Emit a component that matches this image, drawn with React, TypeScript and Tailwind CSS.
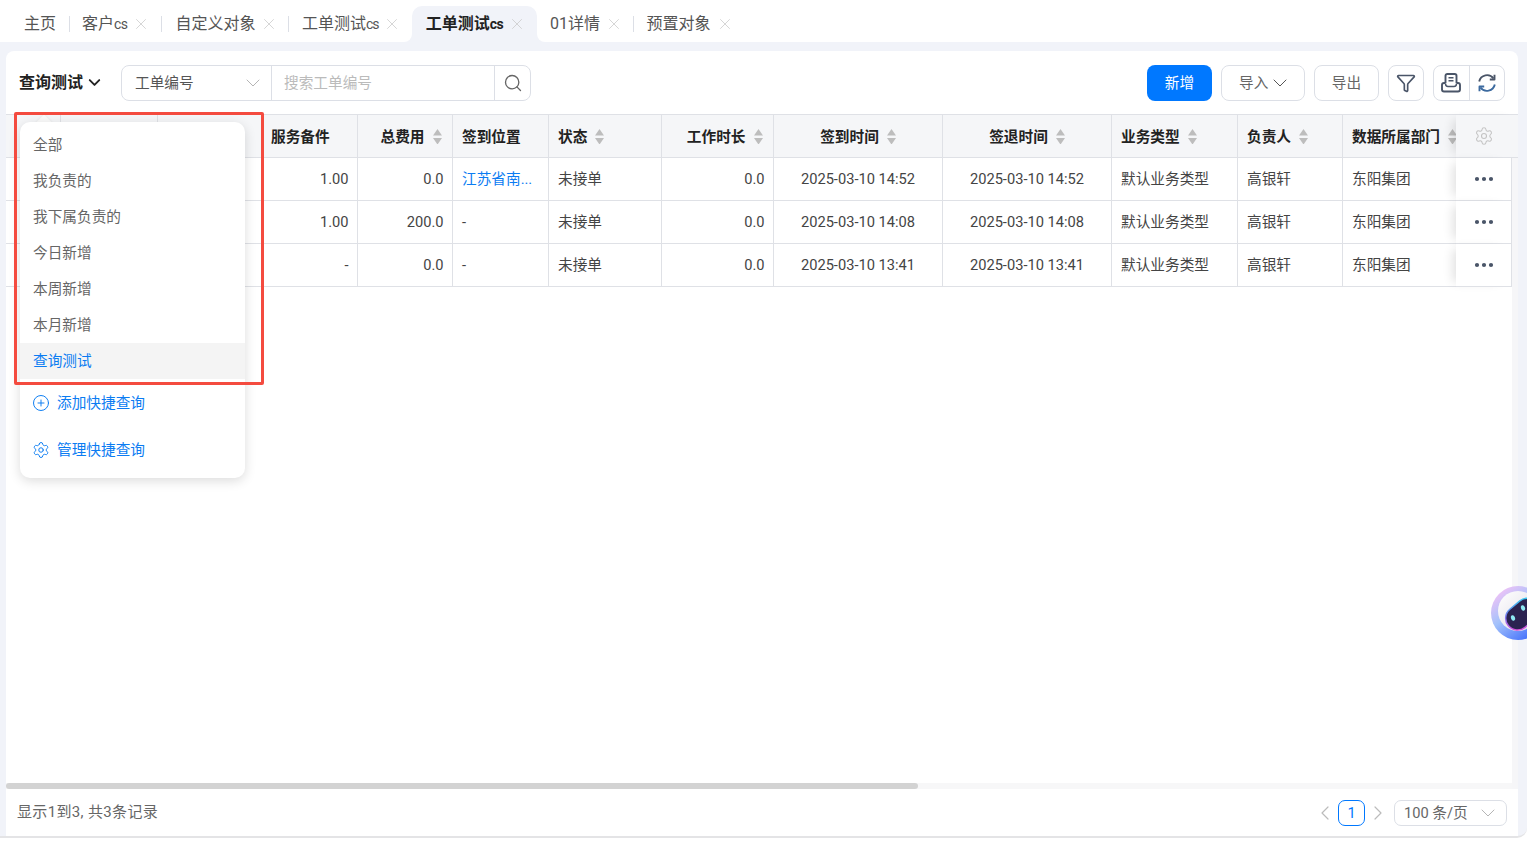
import React from "react";
import { ChevronDown, ChevronLeft, ChevronRight, CirclePlus, Ellipsis, Funnel, Search, Settings, X } from "lucide-react";

const FONT = "font-['Roboto','Noto_Sans_CJK_SC',sans-serif]";
const cols = "grid grid-cols-[55px_97px_104px_96px_95px_96px_113px_112px_169px_169px_126px_105px_113px_1fr]";

function Tab({ label, cs, active, plain, narrow }: { label: string; cs?: boolean; active?: boolean; plain?: boolean; narrow?: boolean }) {
  return (
    <div className={active ? "relative flex h-9 items-center rounded-t-[10px] bg-[#f1f3f9] pl-[14px] pr-[11px] font-bold text-[#222]" : "flex h-9 items-center pl-[13px] text-[#555]"}>
      {active && (
        <>
          <div className="absolute bottom-0 left-[-8px] h-2 w-2 bg-[#f1f3f9]"><div className="h-full w-full rounded-br-[8px] bg-white" /></div>
          <div className="absolute bottom-0 right-[-8px] h-2 w-2 bg-[#f1f3f9]"><div className="h-full w-full rounded-bl-[8px] bg-white" /></div>
        </>
      )}
      <span className="whitespace-nowrap">
        {label}
        {cs && <span className={narrow ? "text-[14px] tracking-[-1.1px]" : "text-[14px] tracking-[-0.6px]"}>cs</span>}
      </span>
      {!plain && <X className="ml-[5px] h-[18px] w-[18px] text-[#c8c8c8]" strokeWidth={1} />}
    </div>
  );
}

function Sep({ wide }: { wide?: boolean }) {
  return <div className={wide ? "flex h-9 w-[12px] items-center justify-end" : "flex h-9 w-[10.5px] items-center justify-end"}><div className="h-4 w-px bg-[#dcdfe6]" /></div>;
}

function Sort() {
  return (
    <span className="ml-2 inline-flex flex-col gap-[2px]">
      <svg width="9" height="6.5" viewBox="0 0 10 6" preserveAspectRatio="none"><path d="M5 0L10 6H0z" fill="#bdbdbd" /></svg>
      <svg width="9" height="6.5" viewBox="0 0 10 6" preserveAspectRatio="none"><path d="M5 6L0 0H10z" fill="#bdbdbd" /></svg>
    </span>
  );
}

function Head({ t, align = "left", sort = true }: { t?: string; align?: "left" | "right" | "center"; sort?: boolean }) {
  const j = align === "left" ? "justify-start pl-[9px]" : align === "right" ? "justify-end pr-[10.5px]" : "justify-center";
  return (
    <div className={"flex h-[43px] items-center overflow-hidden whitespace-nowrap border-r border-b border-[#dfe1e6] pt-[1px] font-bold text-[#222] " + j}>
      {t}
      {t && sort && <Sort />}
    </div>
  );
}

function Cell({ t, align = "left", blue }: { t?: string; align?: "left" | "right" | "center"; blue?: boolean }) {
  const j = align === "left" ? "justify-start pl-[9px]" : align === "right" ? "justify-end pr-[8.5px]" : "justify-center";
  return (
    <div className={"flex h-[43px] items-center overflow-hidden whitespace-nowrap border-r border-b border-[#dfe1e6] " + j + (blue ? " text-[#0b7cf2]" : " text-[#444]")}>
      {t}
    </div>
  );
}

const rows = [
  { parts: "1.00", fee: "0.0", loc: "江苏省南...", blue: true, time: "2025-03-10 14:52" },
  { parts: "1.00", fee: "200.0", loc: "-", blue: false, time: "2025-03-10 14:08" },
  { parts: "-", fee: "0.0", loc: "-", blue: false, time: "2025-03-10 13:41" },
];

function Printer() {
  return (
    <svg width="20" height="20" viewBox="0 0 20 20" fill="none" stroke="#4a5568" strokeWidth="1.9">
      <path d="M4.5 10V2.8C4.5 1.8 5.3 1 6.3 1h7.4c1 0 1.8.8 1.8 1.8V10" />
      <path d="M7.5 4.8h5M7.5 7.8h5" strokeWidth="1.4" />
      <path d="M4.5 10H3c-1.1 0-2 .9-2 2v4.5c0 1.1.9 2 2 2h14c1.1 0 2-.9 2-2V12c0-1.100-.9-2-2-2h-1.500" />
      <path d="M4.500 10.500c0 1.700.8 3 2.500 3h6c1.700 0 2.500-1.300 2.500-3" strokeWidth="1.5" />
    </svg>
  );
}

function Refresh() {
  return (
    <svg width="20" height="20" viewBox="0 0 20 20" fill="none" stroke="#4a5568" strokeWidth="1.9">
      <path d="M2.200 8.500A8 8 0 0 1 16.500 5.500" />
      <path d="M17.800 11.500A8 8 0 0 1 3.500 14.500" stroke="#3c6a9f" />
      <path d="M17.500 1.800v4.700h-4.700" strokeLinejoin="round" />
      <path d="M2.500 18.200v-4.700h4.700" strokeLinejoin="round" stroke="#3c6a9f" />
    </svg>
  );
}

function Robot() {
  return (
    <svg width="54" height="54" viewBox="0 0 54 54">
      <defs>
        <linearGradient id="rg" x1="0.1" y1="0.1" x2="0.75" y2="0.95">
          <stop offset="0" stopColor="#f2c2f6" />
          <stop offset="0.45" stopColor="#a3c2fb" />
          <stop offset="1" stopColor="#4470fb" />
        </linearGradient>
        <linearGradient id="rb" x1="0" y1="1" x2="1" y2="0">
          <stop offset="0" stopColor="#f23fd0" />
          <stop offset="0.5" stopColor="#7a7cf0" />
          <stop offset="1" stopColor="#22dff0" />
        </linearGradient>
        <linearGradient id="rw" x1="0" y1="0" x2="1" y2="1">
          <stop offset="0" stopColor="#ffffff" />
          <stop offset="1" stopColor="#dcd8e4" />
        </linearGradient>
      </defs>
      <circle cx="27" cy="27" r="27" fill="url(#rg)" />
      <circle cx="27" cy="25" r="20" fill="url(#rw)" />
      <g transform="rotate(-40 30 28)">
        <rect x="12" y="16.500" width="38" height="25" rx="12.500" fill="url(#rb)" />
        <rect x="13.500" y="18" width="35" height="22" rx="11" fill="#2b2350" />
      </g>
      <ellipse cx="22" cy="32" rx="2" ry="2.800" fill="#8ee8f2" transform="rotate(-20 22 32)" />
      <ellipse cx="32" cy="22" rx="2" ry="2.800" fill="#8ee8f2" transform="rotate(-20 32 22)" />
    </svg>
  );
}

const menu = ["全部", "我负责的", "我下属负责的", "今日新增", "本周新增", "本月新增"];

export default function App() {
  return (
    <div className={"relative h-[841px] w-[1533px] overflow-hidden bg-white text-[14.67px] " + FONT}>
      {/* tabs */}
      <div className="flex h-[42px] items-end pl-[11px] text-[16px]">
        <Tab label="主页" plain />
        <div className="flex h-9 w-[14px] items-center justify-end"><div className="h-4 w-px bg-[#dcdfe6]" /></div>
        <div className="-ml-[1px]"><Tab label="客户" cs /></div>
        <Sep wide />
        <Tab label="自定义对象" />
        <Sep />
        <Tab label="工单测试" cs narrow />
        <div className="w-[10.5px]" />
        <Tab label="工单测试" cs active />
        <Tab label="01详情" />
        <Sep />
        <Tab label="预置对象" />
      </div>

      {/* main area */}
      <div className="relative h-[796px] w-[1527px] overflow-hidden rounded-br-[10px] border-b-2 border-[#e4e4e6] bg-[#f1f3f9] pl-[6px] pr-[9px] pt-[9px]">
        <div className="relative flex h-[785px] w-[1512px] flex-col rounded-t-[8px] bg-white">
          {/* toolbar */}
          <div className="flex h-[63px] items-center justify-between pl-[13px] pr-[13px]">
            <div className="flex items-center">
              <span className="text-[16px] font-bold text-[#222]">查询测试</span>
              <ChevronDown className="ml-[2px] h-[19px] w-[19px] text-[#222]" strokeWidth={2.4} />
              <div className="ml-[17px] flex h-9 w-[410px] items-center rounded-[8px] border border-[#dcdfe6]">
                <div className="flex h-full w-[150px] items-center justify-between border-r border-[#dcdfe6] pl-[13px] pr-[6px] text-[#555]">
                  工单编号
                  <ChevronDown className="h-6 w-6 text-[#b5b5b5]" strokeWidth={1} />
                </div>
                <div className="flex-1 pl-3 text-[#bbb]">搜索工单编号</div>
                <div className="flex h-full w-[36px] items-center justify-center border-l border-[#dcdfe6]">
                  <Search className="h-5 w-5 text-[#666]" strokeWidth={1.6} />
                </div>
              </div>
            </div>
            <div className="flex items-center gap-[9px]">
              <div className="flex h-9 w-[65px] items-center justify-center rounded-[8px] bg-[#0078ff] text-white">新增</div>
              <div className="flex h-9 w-[84px] items-center rounded-[8px] border border-[#dcdfe6] pl-[17px] text-[#666]">
                导入
                <ChevronDown className="h-6 w-6 text-[#555]" strokeWidth={1} />
              </div>
              <div className="flex h-9 w-[65px] items-center justify-center rounded-[8px] border border-[#dcdfe6] text-[#666]">导出</div>
              <div className="flex h-9 w-9 items-center justify-center rounded-[8px] border border-[#dcdfe6]">
                <Funnel className="h-5 w-5 text-[#4a5568]" strokeWidth={2} />
              </div>
              <div className="flex h-9 w-[72px] items-center rounded-[8px] border border-[#dcdfe6]">
                <div className="flex h-full flex-1 items-center justify-center border-r border-[#dcdfe6]"><Printer /></div>
                <div className="flex h-full flex-1 items-center justify-center"><Refresh /></div>
              </div>
            </div>
          </div>

          {/* table header */}
          <div className={cols + " border-t border-[#dfe1e6] bg-[#f5f6f8]"}>
            <Head /><Head /><Head />
            <Head t="服务备件" sort={false} />
            <Head t="总费用" align="right" />
            <Head t="签到位置" sort={false} />
            <Head t="状态" />
            <Head t="工作时长" align="right" />
            <Head t="签到时间" align="center" />
            <Head t="签退时间" align="center" />
            <Head t="业务类型" />
            <Head t="负责人" />
            <div className="flex h-[43px] items-center whitespace-nowrap border-b border-[#dfe1e6] pl-[9px] pt-[1px] font-bold text-[#222]">
              数据所属部门<Sort />
            </div>
            <div className="relative z-[1] flex h-[43px] items-center justify-center border-b border-[#dfe1e6] bg-[#f5f6f8] pr-[6px] shadow-[-8px_0_10px_-5px_rgba(0,0,0,0.12)]">
              <Settings className="h-5 w-5 text-[#c4c4c4]" strokeWidth={1.3} />
            </div>
          </div>

          {/* table body with its vertical track */}
          <div className="flex min-h-0 flex-1">
            <div className="flex w-[1506px] flex-col">
              <div className={cols + " shrink-0"}>
                {rows.map((r, i) => (
                  <React.Fragment key={i}>
                    <Cell /><Cell /><Cell />
                    <Cell t={r.parts} align="right" />
                    <Cell t={r.fee} align="right" />
                    <Cell t={r.loc} blue={r.blue} />
                    <Cell t="未接单" />
                    <Cell t="0.0" align="right" />
                    <Cell t={r.time} align="center" />
                    <Cell t={r.time} align="center" />
                    <Cell t="默认业务类型" />
                    <Cell t="高银轩" />
                    <div className="flex h-[43px] items-center border-b border-[#dfe1e6] pl-[9px] text-[#444]">东阳集团</div>
                    <div className="relative z-[1] flex h-[43px] items-center justify-center border-r border-b border-[#dfe1e6] bg-white shadow-[-8px_0_10px_-5px_rgba(0,0,0,0.12)]">
                      <Ellipsis className="h-6 w-6 text-[#4a5568]" strokeWidth={2.2} />
                    </div>
                  </React.Fragment>
                ))}
              </div>
              <div className="flex-1" />
              <div className="h-[6px] bg-[#f7f7f8]">
                <div className="h-full w-[912px] rounded-[3px] bg-[#d3d3d3]" />
              </div>
            </div>
            <div className="w-[6px] bg-[#f6f6f8]" />
          </div>

          {/* footer */}
          <div className="flex h-[47px] shrink-0 items-center justify-between pl-[11px] pr-[11px] text-[#666]">
            <span className="text-[15px] tracking-[0.35px]">显示1到3, 共3条记录</span>
            <div className="flex items-center">
              <ChevronLeft className="h-6 w-6 text-[#bbb]" strokeWidth={1.2} />
              <div className="mx-[1px] flex h-[26px] w-[27px] items-center justify-center rounded-[7px] border border-[#0078ff] text-[#0078ff]">1</div>
              <ChevronRight className="h-6 w-6 text-[#bbb]" strokeWidth={1.2} />
              <div className="ml-[4px] flex h-[26px] w-[113px] items-center justify-between rounded-[7px] border border-[#dcdfe6] pl-[9px] pr-[6px]">
                100 条/页
                <ChevronDown className="h-6 w-6 text-[#b5b5b5]" strokeWidth={1} />
              </div>
            </div>
          </div>

          {/* dropdown */}
          <div className="absolute left-[32px] top-[66px] h-3 w-3 rotate-45 bg-[#fafafa] shadow-[0_0_3px_rgba(0,0,0,0.08)]" />
          <div className="absolute left-[14px] top-[71px] flex h-[356px] w-[225px] flex-col rounded-[10px] bg-white pt-[5px] shadow-[0_3px_12px_rgba(0,0,0,0.14)]">
            {menu.map((m) => (
              <div key={m} className="flex h-9 items-center pl-[13px] text-[#666]">{m}</div>
            ))}
            <div className="flex h-9 items-center bg-[#f4f4f4] pl-[13px] text-[#0b7cf2]">查询测试</div>
            <div className="mt-[5px] flex h-[37px] items-center pl-[12px] text-[#0b7cf2]">
              <CirclePlus className="mr-[7px] h-[18px] w-[18px]" strokeWidth={1.3} />添加快捷查询
            </div>
            <div className="mt-[10px] flex h-[37px] items-center pl-[12px] text-[#0b7cf2]">
              <Settings className="mr-[7px] h-[18px] w-[18px]" strokeWidth={1.3} />管理快捷查询
            </div>
          </div>

          {/* red highlight */}
          <div className="pointer-events-none absolute left-[8px] top-[61px] h-[273px] w-[250px] rounded-[2px] border-[3px] border-[#f44b3f]" />
        </div>
        {/* robot */}
        <div className="absolute left-[1491px] top-[544px]"><Robot /></div>
      </div>
    </div>
  );
}
